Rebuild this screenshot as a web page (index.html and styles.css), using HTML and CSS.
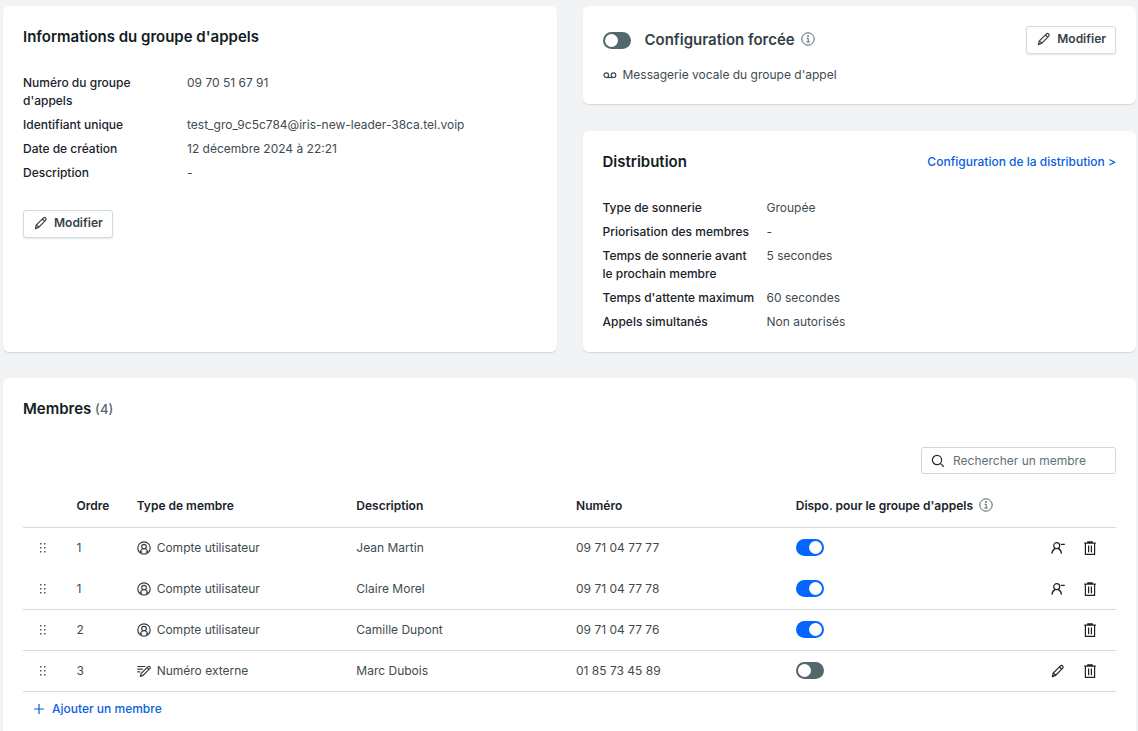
FILE: index.html
```html
<!DOCTYPE html>
<html lang="fr">
<head>
<meta charset="utf-8">
<meta name="viewport" content="width=device-width, initial-scale=1">
<title>Groupe d'appels</title>
<link rel="stylesheet" href="styles.css">
</head>
<body>
<svg class="sprite" aria-hidden="true">
  <symbol id="pencil" viewBox="0 0 14 14"><path d="M1.500 12.500l.7-3.400 7-7c.8-.8 1.700-.8 2.400-.1s.7 1.600-.1 2.400l-7 7zM8.400 3l2.300 2.300M2.600 9.100l2 2"/></symbol>
  <symbol id="info" viewBox="0 0 14 14"><circle cx="7" cy="7" r="6.200"/><path d="M5.600 6.300h1.600v3.600M5.400 10h3.400M6.600 3.600h.9v.8h-.9z"/></symbol>
  <symbol id="voicemail" viewBox="0 0 14 14"><circle cx="3.300" cy="7.200" r="2.300"/><circle cx="10.500" cy="7.200" r="2.300"/><path d="M3.300 9.500h7.200"/></symbol>
  <symbol id="search" viewBox="0 0 14 14"><circle cx="6" cy="6" r="4.600"/><path d="M9.400 9.400l3.400 3.400"/></symbol>
  <symbol id="grip" viewBox="0 0 8 10"><path d="M1 0h1.500v1.500H1zM5 0h1.500v1.500H5zM1 4h1.500v1.500H1zM5 4h1.500v1.500H5zM1 8h1.500v1.500H1zM5 8h1.500v1.500H5z"/></symbol>
  <symbol id="account" viewBox="0 0 14 14"><circle cx="7" cy="7" r="6.200"/><circle cx="7" cy="5.600" r="2.300"/><path d="M3.400 11.800c0-2 .8-3.300 2.100-4M10.600 11.800c0-2-.8-3.300-2.100-4M3.600 11.200h1.600M8.800 11.200h1.600"/></symbol>
  <symbol id="edit-lines" viewBox="0 0 14 14"><path d="M.3 2.500h8M.3 5.200h5.500M.3 7.900h3M3.500 12.400l.6-2.900 6.700-6.700c.7-.7 1.400-.7 2-.1s.6 1.300-.1 2l-6.700 6.700zM10 3.700l1.900 1.900"/></symbol>
  <symbol id="user-minus" viewBox="0 0 14 14"><circle cx="5.700" cy="4.700" r="3"/><path d="M.9 12.600c.2-2.600 1.400-4.200 3.400-5.200M10.500 12.600c-.2-2.600-1.400-4.200-3.400-5.200M9.800 3.400h4"/></symbol>
  <symbol id="trash" viewBox="0 0 14 14"><path d="M1.200 2.200h11.600M4.800 2V.8h4.400V2M2.400 2.400v10.900h9.200V2.400M5.600 4.400v6.900M8.400 4.400v6.900"/></symbol>
  <symbol id="plus" viewBox="0 0 12 12"><path d="M6 1v10M1 6h10"/></symbol>
</svg>

<main class="page">
  <div class="overview">
    <section class="card">
      <h2 class="title">Informations du groupe d'appels</h2>
      <dl class="details">
        <dt>Numéro du groupe d'appels</dt><dd>09 70 51 67 91</dd>
        <dt>Identifiant unique</dt><dd>test_gro_9c5c784@iris-new-leader-38ca.tel.voip</dd>
        <dt>Date de création</dt><dd>12 décembre 2024 à 22:21</dd>
        <dt>Description</dt><dd>-</dd>
      </dl>
      <button class="button button-info" type="button"><svg class="icon"><use href="#pencil"/></svg>Modifier</button>
    </section>
    <div class="stack">
      <section class="card">
        <div class="card-head">
          <input class="switch" type="checkbox" role="switch" id="forced">
          <label class="title title-forced" for="forced">Configuration forcée</label>
          <svg class="icon icon-info"><use href="#info"/></svg>
          <button class="button button-end" type="button"><svg class="icon"><use href="#pencil"/></svg>Modifier</button>
        </div>
        <p class="voicemail"><svg class="icon"><use href="#voicemail"/></svg>Messagerie vocale du groupe d'appel</p>
      </section>
      <section class="card card-grow">
        <div class="card-head card-head-split">
          <h2 class="title">Distribution</h2>
          <a class="link" href="#distribution">Configuration de la distribution &gt;</a>
        </div>
        <dl class="details">
          <dt>Type de sonnerie</dt><dd>Groupée</dd>
          <dt>Priorisation des membres</dt><dd>-</dd>
          <dt>Temps de sonnerie avant le prochain membre</dt><dd>5 secondes</dd>
          <dt>Temps d'attente maximum</dt><dd>60 secondes</dd>
          <dt>Appels simultanés</dt><dd>Non autorisés</dd>
        </dl>
      </section>
    </div>
  </div>

  <section class="card card-members">
    <h2 class="title">Membres <span class="count">(4)</span></h2>
    <div class="toolbar">
      <label class="search"><svg class="icon"><use href="#search"/></svg><input class="search-input" type="search" placeholder="Rechercher un membre" aria-label="Rechercher un membre"></label>
    </div>
    <table class="members">
      <thead>
        <tr>
          <th class="col-grip"></th>
          <th class="col-order">Ordre</th>
          <th class="col-wide">Type de membre</th>
          <th class="col-wide">Description</th>
          <th class="col-wide">Numéro</th>
          <th><span class="with-icon">Dispo. pour le groupe d'appels<svg class="icon icon-info"><use href="#info"/></svg></span></th>
          <th class="col-actions"></th>
        </tr>
      </thead>
      <tbody>
        <tr class="joined">
          <td><svg class="grip"><use href="#grip"/></svg></td><td>1</td>
          <td><span class="member-type"><svg class="icon"><use href="#account"/></svg>Compte utilisateur</span></td>
          <td>Jean Martin</td><td>09 71 04 77 77</td>
          <td><input class="switch" type="checkbox" role="switch" aria-label="Disponibilité de Jean Martin" checked></td>
          <td><div class="actions"><button class="icon-button" type="button" aria-label="Dissocier"><svg class="icon"><use href="#user-minus"/></svg></button><button class="icon-button" type="button" aria-label="Supprimer"><svg class="icon"><use href="#trash"/></svg></button></div></td>
        </tr>
        <tr>
          <td><svg class="grip"><use href="#grip"/></svg></td><td>1</td>
          <td><span class="member-type"><svg class="icon"><use href="#account"/></svg>Compte utilisateur</span></td>
          <td>Claire Morel</td><td>09 71 04 77 78</td>
          <td><input class="switch" type="checkbox" role="switch" aria-label="Disponibilité de Claire Morel" checked></td>
          <td><div class="actions"><button class="icon-button" type="button" aria-label="Dissocier"><svg class="icon"><use href="#user-minus"/></svg></button><button class="icon-button" type="button" aria-label="Supprimer"><svg class="icon"><use href="#trash"/></svg></button></div></td>
        </tr>
        <tr>
          <td><svg class="grip"><use href="#grip"/></svg></td><td>2</td>
          <td><span class="member-type"><svg class="icon"><use href="#account"/></svg>Compte utilisateur</span></td>
          <td>Camille Dupont</td><td>09 71 04 77 76</td>
          <td><input class="switch" type="checkbox" role="switch" aria-label="Disponibilité de Camille Dupont" checked></td>
          <td><div class="actions"><button class="icon-button" type="button" aria-label="Supprimer"><svg class="icon"><use href="#trash"/></svg></button></div></td>
        </tr>
        <tr>
          <td><svg class="grip"><use href="#grip"/></svg></td><td>3</td>
          <td><span class="member-type"><svg class="icon"><use href="#edit-lines"/></svg>Numéro externe</span></td>
          <td>Marc Dubois</td><td>01 85 73 45 89</td>
          <td><input class="switch" type="checkbox" role="switch" aria-label="Disponibilité de Marc Dubois"></td>
          <td><div class="actions"><button class="icon-button" type="button" aria-label="Modifier"><svg class="icon"><use href="#pencil"/></svg></button><button class="icon-button" type="button" aria-label="Supprimer"><svg class="icon"><use href="#trash"/></svg></button></div></td>
        </tr>
      </tbody>
    </table>
    <button class="add" type="button"><svg class="icon icon-plus"><use href="#plus"/></svg>Ajouter un membre</button>
  </section>
</main>
</body>
</html>
```
FILE: styles.css
```css
* { box-sizing: border-box; }

body {
  margin: 0;
  background: #f1f3f5;
  color: #404b50;
  font: 400 12px/18px Inter, sans-serif;
}

button, input { font: inherit; }

.sprite { display: block; width: 0; height: 0; }

.page {
  display: flex;
  flex-direction: column;
  gap: 26px;
  min-height: 100vh;
  padding: 6px 2px 0 3px;
}

.overview { display: grid; grid-template-columns: 1fr 1fr; gap: 26px; }
.stack { display: flex; flex-direction: column; gap: 27px; }

.card {
  padding: 20px;
  border-radius: 6px;
  background: #fff;
  box-shadow: 0 1px 1px #d3d8dc;
}
.card-grow { flex: 1; padding-bottom: 21px; }
.card-members { flex: 1; border-radius: 6px 6px 0 0; }

.card-head { display: flex; align-items: center; }
.card-head-split { justify-content: space-between; }

.title {
  margin: 0;
  color: #131c24;
  font-size: 15px;
  font-weight: 600;
  line-height: 22px;
}
.title-forced { margin: 0 6px 0 14px; color: #333f46; }
.count { color: #5c686d; font-size: 13px; font-weight: 500; }

.details {
  display: grid;
  grid-template-columns: 154px 1fr;
  gap: 6px 10px;
  margin: 26px 0 0;
}
.details dt { color: #19232b; font-weight: 500; }
.details dd { margin: 0; }

.icon {
  flex: none;
  width: 14px;
  height: 14px;
  fill: none;
  stroke: currentColor;
  stroke-width: 1.2;
}
.icon-info { margin-bottom: 3px; color: #53646a; stroke-width: 1; }
.icon-plus { width: 12px; height: 12px; }

.button {
  display: inline-flex;
  align-items: center;
  gap: 6px;
  height: 28px;
  padding: 0 9px 2px 10px;
  border: 1px solid #d5dadd;
  border-radius: 3px;
  background: #fff;
  box-shadow: 0 1px 2px #e3e7e9;
  color: #36434a;
  font-weight: 600;
}
.button-info { margin-top: 28px; }
.button-end { margin-left: auto; }

.link { color: #0a5fe0; font-weight: 500; text-decoration: none; }

.switch {
  appearance: none;
  display: flex;
  align-items: center;
  flex: none;
  width: 28px;
  height: 17px;
  margin: 0;
  padding: 0 2px;
  border-radius: 9px;
  background: #53676d;
}
.switch::before {
  content: "";
  width: 13px;
  height: 13px;
  border-radius: 50%;
  background: #fff;
}
.switch:checked { justify-content: flex-end; background: #0566ff; }

.voicemail { display: flex; align-items: center; gap: 6px; margin: 12px 0 0; }

.toolbar { display: flex; justify-content: flex-end; margin-top: 27px; }
.search {
  display: flex;
  align-items: center;
  gap: 8px;
  width: 195px;
  height: 27px;
  padding: 0 9px;
  border: 1px solid #cfd7da;
  border-radius: 3px;
  color: #1f282e;
}
.search-input {
  flex: 1;
  min-width: 0;
  padding: 0;
  border: 0;
  outline: 0;
  background: none;
}
.search-input::placeholder { color: #5f7077; opacity: 1; }

.members {
  width: 100%;
  margin-top: 12px;
  border-collapse: collapse;
  table-layout: fixed;
}
.members th, .members td {
  height: 41px;
  padding: 0;
  border-bottom: 1px solid #d5dadd;
  text-align: left;
}
.members th { color: #19232b; font-weight: 600; }
.members .joined td { border-bottom-color: transparent; }
.col-grip { width: 4.9%; }
.col-order { width: 5.5%; }
.col-wide { width: 20.1%; }
.col-actions { width: 80px; }

.with-icon, .member-type, .actions { display: flex; align-items: center; gap: 6px; }
.member-type .icon { color: #333f46; }
.grip { display: block; width: 8px; height: 10px; margin-left: 16px; fill: #4b565b; }
.actions { justify-content: flex-end; gap: 18px; padding-right: 19px; }
.icon-button { display: flex; padding: 0; border: 0; background: none; color: #1b2328; }

.add {
  display: flex;
  align-items: center;
  gap: 7px;
  margin-top: 8px;
  padding: 0 0 0 10px;
  border: 0;
  background: none;
  color: #0a5fe0;
  font-weight: 500;
}
```
